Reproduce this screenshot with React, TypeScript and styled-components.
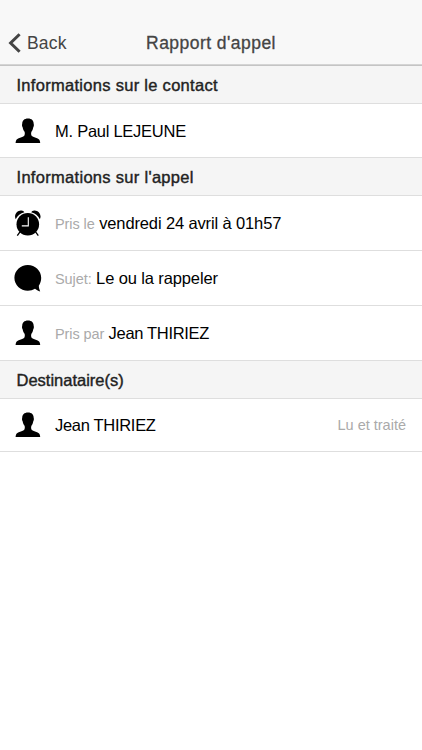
import React from "react";
import styled, { createGlobalStyle } from "styled-components";

const GlobalStyle = createGlobalStyle`
  * { box-sizing: border-box; }
  html, body { margin: 0; background: #fff; }
  body { font-family: "Liberation Sans", Arial, sans-serif; color: #000; }
`;

const Screen = styled.main`
  display: flex;
  flex-direction: column;
  width: 422px;
  height: 750px;
  overflow: hidden;
  background: #fff;
`;

const NavBar = styled.header`
  display: grid;
  grid-template-columns: 1fr auto 1fr;
  align-items: center;
  flex: none;
  height: 66px;
  padding: 20px 8px 0;
  background: #f8f8f8;
  border-bottom: 1px solid #c4c4c4;
  box-shadow: inset 0 -1px 0 #d4d4d4;
  color: #444;
`;

const BackButton = styled.button`
  display: flex;
  align-items: center;
  gap: 6px;
  padding: 0;
  border: 0;
  background: none;
  color: inherit;
  font: 17.5px/22px "Liberation Sans", Arial, sans-serif;
  letter-spacing: 0.2px;
`;

const Title = styled.h1`
  margin: 0;
  font-size: 17.5px;
  line-height: 22px;
  font-weight: 400;
  letter-spacing: 0.46px;
  -webkit-text-stroke: 0.3px currentColor;
`;

const Divider = styled.h2<{ $spacing?: number }>`
  display: flex;
  align-items: center;
  flex: none;
  height: 38px;
  margin: 0;
  padding: 1px 16.5px 0;
  background: #f5f5f5;
  border-bottom: 1px solid #dedede;
  color: #222;
  font-size: 16.5px;
  font-weight: 400;
  letter-spacing: ${(p) => p.$spacing ?? 0}px;
  -webkit-text-stroke: 0.4px currentColor;
`;

const Row = styled.div<{ $height: number }>`
  display: flex;
  align-items: center;
  flex: none;
  height: ${(p) => p.$height}px;
  padding: 0 16px 0 14px;
  border-bottom: 1px solid #dedede;
  white-space: pre;
`;

const Glyph = styled.svg`
  flex: none;
  width: 28px;
  height: 28px;
  margin-right: 13px;
`;

const Content = styled.span<{ $spacing?: number }>`
  font-size: 16.5px;
  line-height: 20px;
  letter-spacing: ${(p) => p.$spacing ?? 0}px;
`;

const Label = styled.span`
  color: #aaa;
  font-size: 14.5px;
  letter-spacing: -0.08px;
`;

const Note = styled(Label)`
  margin-left: auto;
  letter-spacing: 0;
`;

const Person = () => (
  <Glyph viewBox="0 0 28 28">
    <path d="M14 1.5C10.2 1.5 8.2 3.6 8.2 7C7.8 7.7 8 9.4 8.7 10.4C9.1 12.4 9.7 13.7 10.6 14.8C11 16.3 10.9 18 10.1 18.9C7.8 20.7 4.2 20.8 2.7 22.6C1.9 23.6 1.7 24.8 1.6 26.1H26.2C26.1 24.8 25.9 23.6 25.1 22.6C23.6 20.8 20.2 20.7 17.8 18.9C17 18 16.9 16.3 17.4 14.8C18.3 13.7 18.8 12.4 19.2 10.4C19.9 9.4 20.1 7.7 19.7 7C19.7 3.6 17.8 1.5 14 1.5Z" />
  </Glyph>
);

const Alarm = () => (
  <Glyph viewBox="0 0 28 28">
    <circle cx="13.8" cy="15.3" r="11.3" />
    <path d="M1.7 10.2C-.5 5.8 3.2 1.1 7.3 1.4C8.8 1.5 10 2.3 10.4 3.3C6.4 4.3 3.5 6.7 1.7 10.2ZM25.9 10.2C28.1 5.8 24.4 1.1 20.3 1.4C18.8 1.5 17.6 2.3 17.2 3.3C21.2 4.3 24.1 6.7 25.9 10.2Z" />
    <path d="M6 22.8L3.3 26.6M21.6 22.8L24.3 26.6" stroke="#000" strokeWidth="1.3" />
    <path d="M14.3 8.3V16.9H7.8" fill="none" stroke="#fff" strokeWidth="1.1" />
  </Glyph>
);

const Bubble = () => (
  <Glyph viewBox="0 0 28 28">
    <path d="M13.8.9C6.4.9.4 6.6.4 13.8S6.4 26.8 13.8 26.8C16.6 26.8 18.9 26.1 21 24.8C22.3 25.9 24 26.9 26.2 27.4C25.4 25.5 24.9 23.9 24.8 21.8C26.3 19.5 27.2 16.8 27.2 13.8C27.2 6.6 21.2.9 13.8.9Z" />
  </Glyph>
);

const Chevron = styled.svg`
  width: 13px;
  height: 20px;
`;

export default function App() {
  return (
    <Screen>
      <GlobalStyle />
      <NavBar>
        <BackButton>
          <Chevron viewBox="0 0 13 20">
            <path d="M11.6 1.2L2.6 10L11.6 18.8" fill="none" stroke="#444" strokeWidth="3" />
          </Chevron>
          Back
        </BackButton>
        <Title>Rapport d'appel</Title>
      </NavBar>
      <Divider $spacing={0.29}>Informations sur le contact</Divider>
      <Row $height={54}>
        <Person />
        <Content $spacing={-0.26}>M. Paul LEJEUNE</Content>
      </Row>
      <Divider $spacing={0.3}>Informations sur l'appel</Divider>
      <Row $height={55}>
        <Alarm />
        <Content $spacing={-0.13}><Label>Pris le</Label> vendredi 24 avril à 01h57</Content>
      </Row>
      <Row $height={55}>
        <Bubble />
        <Content $spacing={-0.12}><Label>Sujet:</Label> Le ou la rappeler</Content>
      </Row>
      <Row $height={55}>
        <Person />
        <Content $spacing={-0.32}><Label>Pris par</Label> Jean THIRIEZ</Content>
      </Row>
      <Divider>Destinataire(s)</Divider>
      <Row $height={53}>
        <Person />
        <Content $spacing={-0.3}>Jean THIRIEZ</Content>
        <Note>Lu et traité</Note>
      </Row>
    </Screen>
  );
}
